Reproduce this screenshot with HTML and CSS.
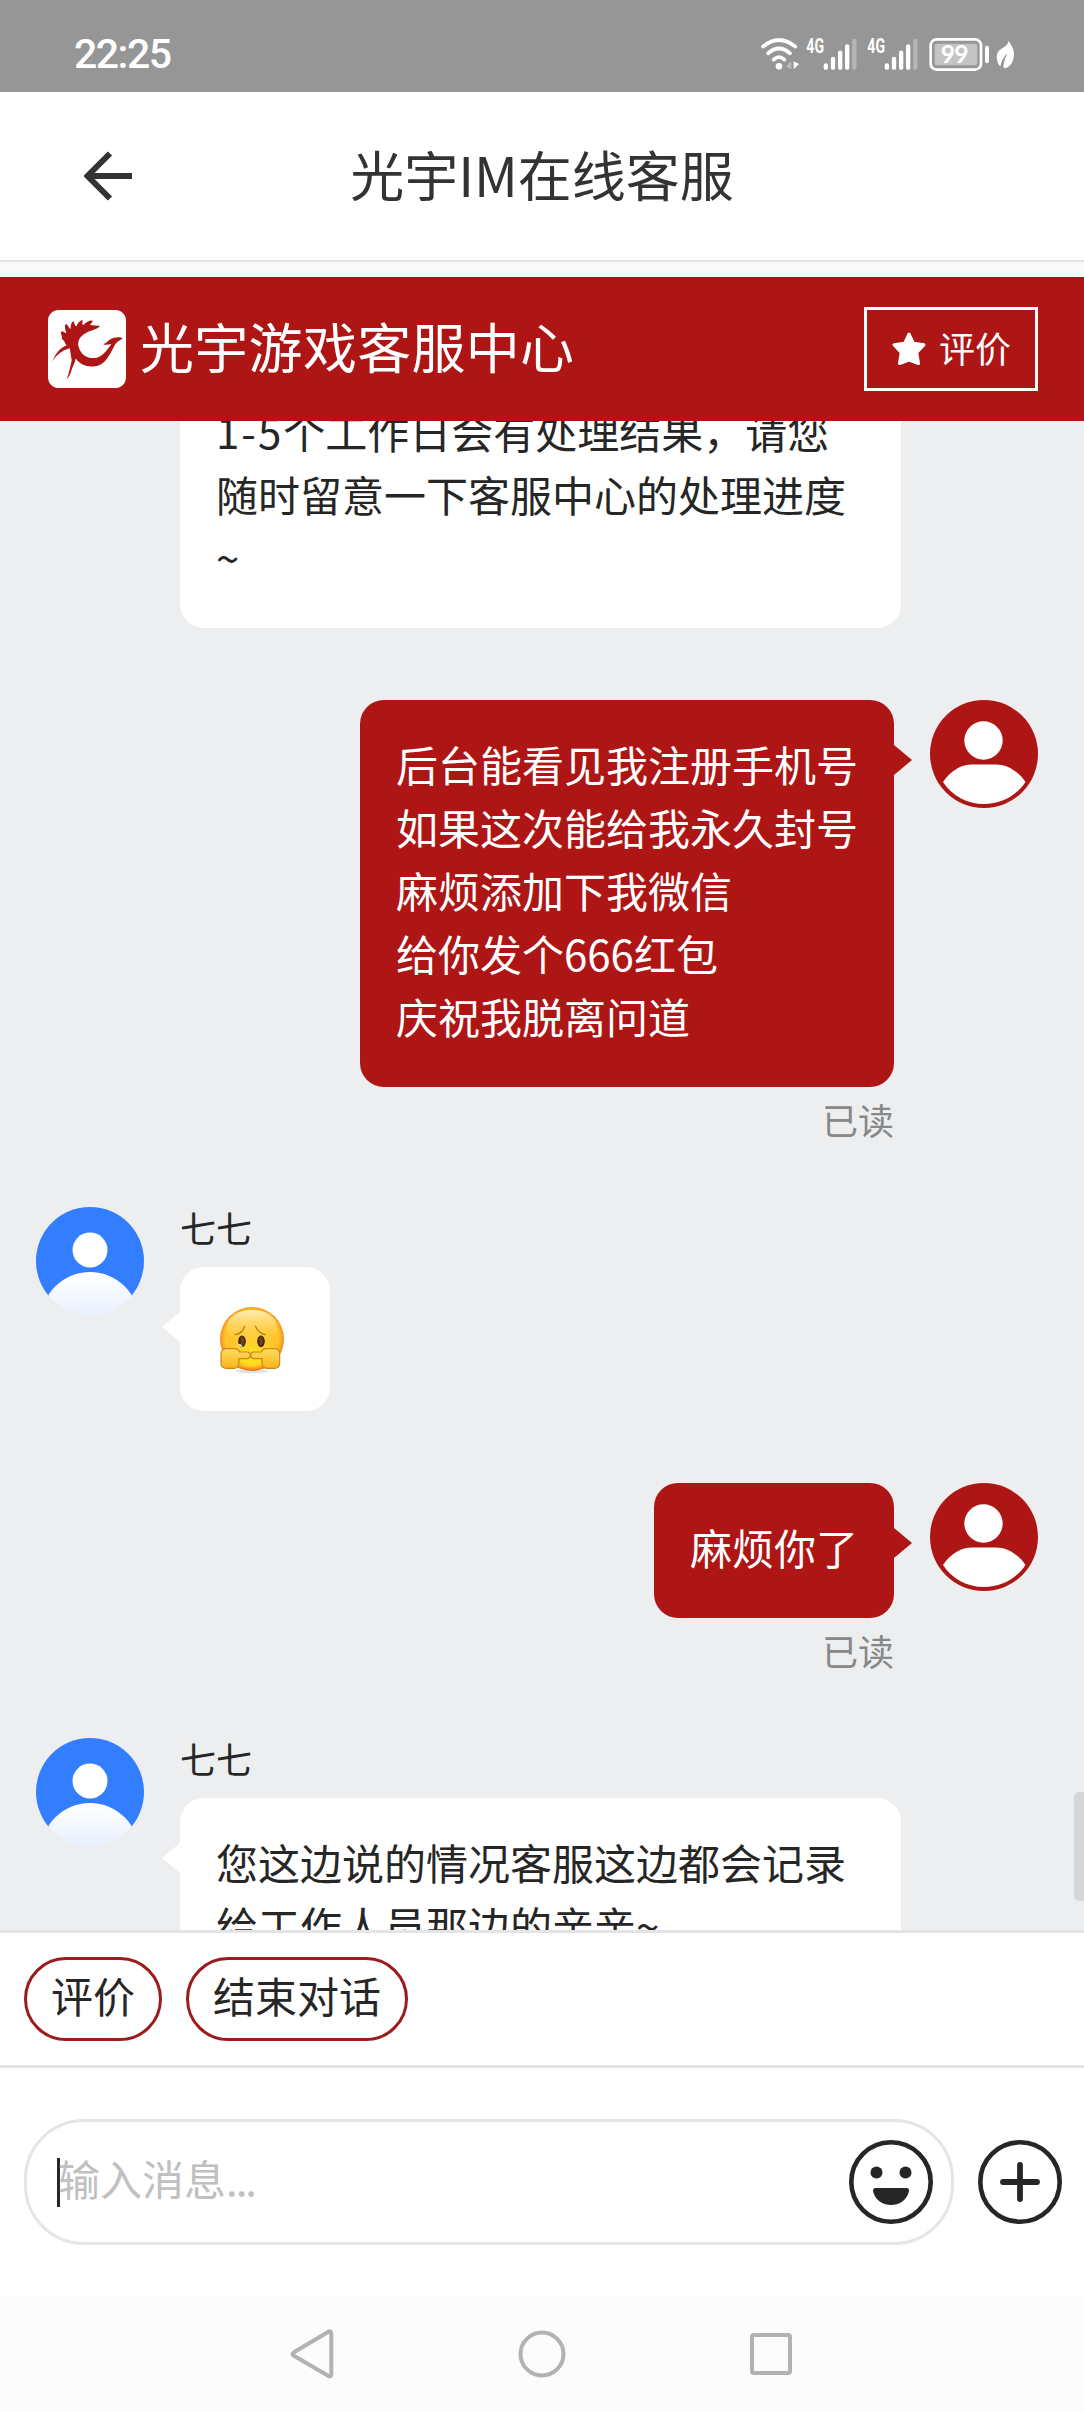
FILE: index.html
```html
<!DOCTYPE html>
<html lang="zh-CN">
<head>
<meta charset="utf-8">
<title>光宇IM在线客服</title>
<link rel="stylesheet" href="styles.css">
</head>
<body>
<svg class="defs" width="0" height="0" aria-hidden="true">
  <defs>
    <linearGradient id="body-fade" x1="0" y1="0" x2="0" y2=".45">
      <stop offset="0" stop-color="#ffffff"/><stop offset="1" stop-color="#e8f0ff"/>
    </linearGradient>
    <clipPath id="round"><circle cx="54" cy="54" r="54"/></clipPath>
    <symbol id="agent" viewBox="0 0 108 108">
      <g clip-path="url(#round)">
        <rect width="108" height="89" fill="#337eff"/>
        <circle cx="54" cy="43" r="17.500" fill="#fff"/>
        <circle cx="54" cy="114" r="49" fill="url(#body-fade)"/>
      </g>
    </symbol>
    <symbol id="visitor" viewBox="0 0 108 108">
      <circle cx="54" cy="54" r="54" fill="#ae1615"/>
      <circle cx="53.500" cy="40.500" r="19.200" fill="#fff"/>
      <path d="M13 82C21 70 32 64.500 42 64.500H66C77 64.500 88 71 95.500 82C86 96 71 104 54 104C37 104 22 96 13 82Z" fill="#fff"/>
    </symbol>
    <symbol id="signal" viewBox="195 105 183 114">
      <g stroke="#fff" stroke-width="13" stroke-linecap="round">
        <path d="M257.500 196V203M279 177V203M300.500 158V203M321.500 139V203"/>
        <path d="M343 123V203" stroke="#b5b5b5"/>
      </g>
      <text x="199" y="158" class="net" textLength="53" lengthAdjust="spacingAndGlyphs">4G</text>
    </symbol>
  </defs>
</svg>

<div class="phone">
  <div class="status">
    <span class="clock">22:25</span>
    <div class="status-icons">
      <svg width="44" height="38" viewBox="63 105 132 114">
        <g fill="none" stroke="#fff" stroke-width="11" stroke-linecap="round">
          <path d="M69 140Q117 100 166 140"/><path d="M84 160Q117 131 150 160"/><path d="M101 179Q117 164 133 179"/>
        </g>
        <circle cx="117" cy="199" r="10" fill="#fff"/>
        <path d="M154 184V208L138 199Z" fill="#bdbdbd"/><path d="M161 184L177 192L161 208Z" fill="#fff"/>
      </svg>
      <svg width="61" height="38"><use href="#signal"/></svg>
      <svg width="61" height="38"><use href="#signal"/></svg>
      <svg width="68" height="38" viewBox="561 105 204 114">
        <rect x="572" y="118" width="151" height="91" rx="18" fill="none" stroke="#fff" stroke-width="8"/>
        <rect x="584" y="131" width="128" height="65" rx="6" fill="#c4c4c4"/>
        <path d="M741 143V184" stroke="#fff" stroke-width="12" stroke-linecap="round"/>
        <text x="602" y="190" class="charge" textLength="84">99</text>
      </svg>
      <svg width="22" height="38" viewBox="765 105 66 114">
        <path d="M806 122C810 132 823 143 822 164C821 188 808 204 791 205C789 190 797 173 802 160C790 171 784 185 781 199C770 189 766 165 776 153C784 143 802 141 806 122Z" fill="#fff"/>
      </svg>
    </div>
  </div>

  <header class="titlebar">
    <svg class="back" width="49" height="50" viewBox="0 0 49 50"><path d="M26 2.500L3.500 25L26 47.500M4 25H48" fill="none" stroke="#333" stroke-width="6"/></svg>
    <h1>光宇IM在线客服</h1>
  </header>

  <div class="brand">
    <svg width="78" height="78" viewBox="24 18 234 234">
      <rect x="24" y="18" width="234" height="234" rx="32" fill="#fff"/>
      <g fill="#ae1615">
        <path d="M100 180C91 160 93 145 88 128C72 124 78 110 64 104C72 100 58 90 65 82C70 80 74 88 79 87C75 74 72 62 79 60C84 62 86 73 92 75C91 62 95 54 101 52C104 58 103 65 109 67C113 57 120 50 127 48C130 53 124 61 130 63C138 54 150 48 158 50C158 56 151 59 150 63L181 66C168 78 151 79 138 87C116 98 110 117 118 134C126 156 148 166 171 161C190 156 202 137 214 120C206 122 197 124 190 121C203 115 207 105 220 102C231 98 245 100 248 103C243 109 232 112 226 120C214 143 201 173 179 183C153 193 122 187 107 163Z"/>
        <path d="M89 121C67 128 51 139 36 174C47 156 60 141 91 132Z"/>
        <path d="M99 150C93 181 89 200 80 226C90 217 93 202 97 192C101 182 106 174 107 162Z"/>
      </g>
    </svg>
    <span class="brand-name">光宇游戏客服中心</span>
    <button class="rate">
      <svg width="34" height="34" viewBox="0 0 34 34"><path d="M17 2L21.500 11.300L32 12.800L24.800 20.500L26.500 31.500L17 28L7.500 31.500L9.200 20.500L2 12.800L12.500 11.300Z" fill="#fff" stroke="#fff" stroke-width="3" stroke-linejoin="round"/></svg>
      <span>评价</span>
    </button>
  </div>

  <main class="chat">
    <div class="log">
      <div class="msg received first">
        <div class="bubble"><span class="days">1-5</span>个工作日会有处理结果，请您<br>随时留意一下客服中心的处理进度<br>~</div>
      </div>
      <div class="msg sent">
        <div class="col">
          <div class="bubble">后台能看见我注册手机号<br>如果这次能给我永久封号<br>麻烦添加下我微信<br>给你发个666红包<br>庆祝我脱离问道</div>
          <div class="read">已读</div>
        </div>
        <svg class="avatar"><use href="#visitor"/></svg>
      </div>
      <div class="msg received">
        <svg class="avatar"><use href="#agent"/></svg>
        <div class="col">
          <div class="name">七七</div>
          <div class="bubble sticker">
            <svg width="66" height="68" viewBox="0 0 198 204">
              <defs>
                <radialGradient id="face" cx=".5" cy=".48" r=".52"><stop offset="0" stop-color="#ffce32"/><stop offset=".8" stop-color="#ffc42a"/><stop offset=".92" stop-color="#f9a01f"/><stop offset="1" stop-color="#e66a18"/></radialGradient>
                <linearGradient id="shine" x1="0" y1="0" x2="0" y2="1"><stop offset="0" stop-color="#fff0bb"/><stop offset="1" stop-color="#ffc936" stop-opacity="0"/></linearGradient>
                <radialGradient id="glow" cx=".5" cy=".7" r=".5"><stop offset="0" stop-color="#ffe81c"/><stop offset="1" stop-color="#ffe61c" stop-opacity="0"/></radialGradient>
                <linearGradient id="hand" x1="0" y1="0" x2="0" y2="1"><stop offset="0" stop-color="#ffdc62"/><stop offset="1" stop-color="#f6b516"/></linearGradient>
              </defs>
              <ellipse cx="99" cy="196" rx="50" ry="6" fill="#e2e2e2"/>
              <circle cx="99" cy="99" r="96" fill="url(#face)"/>
              <ellipse cx="99" cy="130" rx="74" ry="54" fill="url(#glow)"/>
              <ellipse cx="99" cy="64" rx="76" ry="52" fill="url(#shine)"/>
              <path d="M48 86Q71 83 77 60M109 60Q118 82 139 86" fill="none" stroke="#bb7c18" stroke-width="3.500" stroke-linecap="round"/>
              <ellipse cx="69" cy="106" rx="11.500" ry="17.500" fill="#49290a"/>
              <ellipse cx="126" cy="106" rx="11.500" ry="17.500" fill="#49290a"/>
              <ellipse cx="70" cy="105" rx="5" ry="13" fill="#704618"/><ellipse cx="126" cy="105" rx="5" ry="13" fill="#704618"/>
              <path d="M58 114Q60 124 72 122L65 115Z" fill="#d9f1ee"/>
              <g fill="url(#hand)" stroke="#cb8519" stroke-width="3.500">
                <path d="M19 128H47Q59 129 62 138H87Q94 140 94 148Q94 156 87 158H60V171Q59 186 46 187H20Q7 186 6 172V142Q7 130 19 128Z"/>
                <path d="M170 128H142Q130 129 127 138H102Q95 140 95 148Q95 156 102 158H129V171Q130 186 143 187H168Q181 186 182 172V142Q181 130 170 128Z"/>
              </g>
            </svg>
          </div>
        </div>
      </div>
      <div class="msg sent">
        <div class="col">
          <div class="bubble">麻烦你了</div>
          <div class="read">已读</div>
        </div>
        <svg class="avatar"><use href="#visitor"/></svg>
      </div>
      <div class="msg received">
        <svg class="avatar"><use href="#agent"/></svg>
        <div class="col">
          <div class="name">七七</div>
          <div class="bubble wide">您这边说的情况客服这边都会记录<br>给工作人员那边的亲亲~</div>
        </div>
      </div>
    </div>
    <div class="scrollbar"></div>
  </main>

  <div class="quick">
    <button class="pill">评价</button>
    <button class="pill">结束对话</button>
  </div>

  <div class="composer">
    <div class="field">
      <span class="caret"></span>
      <span class="placeholder">输入消息<span class="dots">...</span></span>
      <svg width="84" height="84" viewBox="0 0 84 84">
        <circle cx="42" cy="42" r="39.700" fill="none" stroke="#262626" stroke-width="4.600"/>
        <circle cx="27.500" cy="32.500" r="6" fill="#262626"/><circle cx="56.500" cy="32.500" r="6" fill="#262626"/>
        <path d="M26 48H58Q60 48 60 50.500C59 59 51 65 42 65C33 65 25 59 24 50.500Q24 48 26 48Z" fill="#262626"/>
      </svg>
    </div>
    <svg width="84" height="84" viewBox="0 0 84 84">
      <circle cx="42" cy="42" r="39.700" fill="none" stroke="#262626" stroke-width="4.600"/>
      <path d="M25 42H59M42 25V59" stroke="#262626" stroke-width="5.800" stroke-linecap="round"/>
    </svg>
  </div>

  <nav class="navbar">
    <svg width="48" height="50" viewBox="0 0 48 50"><path d="M41 2.500Q43.300 2 43.300 5V45Q43.300 48 40.500 47L5.500 26.500Q3.500 25 5.500 23.500Z" fill="none" stroke="#b2b2b2" stroke-width="4"/></svg>
    <svg width="48" height="50" viewBox="0 0 48 50"><circle cx="24" cy="25" r="21.500" fill="none" stroke="#b2b2b2" stroke-width="4"/></svg>
    <svg width="48" height="50" viewBox="0 0 48 50"><rect x="5" y="6" width="38" height="38" rx="2" fill="none" stroke="#b2b2b2" stroke-width="4"/></svg>
  </nav>
</div>
</body>
</html>
```
FILE: styles.css
```css
* { box-sizing: border-box; }

body {
  margin: 0;
  font-family: "Noto Sans CJK SC", sans-serif;
  color: #262626;
  background: #fff;
}

svg { display: block; flex: none; }
.defs { position: absolute; }

button {
  font: inherit;
  color: inherit;
  background: none;
  margin: 0;
}

.phone {
  width: 1084px;
  height: 2412px;
  display: flex;
  flex-direction: column;
  overflow: hidden;
}

.status {
  flex: none;
  height: 92px;
  padding: 16px 67px 0 74px;
  background: #969696;
  color: #fff;
  display: flex;
  align-items: center;
  justify-content: space-between;
}
.clock {
  font: 500 41px/60px Roboto, sans-serif;
  letter-spacing: -1.5px;
}
.status-icons { display: flex; }
.net { font: 700 58px Roboto, sans-serif; fill: #fff; }
.charge { font: 700 74px Lato, sans-serif; fill: #fff; }

.titlebar {
  flex: none;
  height: 185px;
  padding: 0 84px 17px;
  display: flex;
  align-items: center;
  background: linear-gradient(#fff 168px, #dcdcdc 168px, #ececec 170px, #fafafa 170px);
}
.titlebar h1 {
  flex: 1;
  margin: 0 49px 4px 0;
  text-align: center;
  font-size: 54px;
  font-weight: 400;
  line-height: 80px;
  color: #333;
}

.brand {
  flex: none;
  height: 144px;
  padding: 0 46px 0 48px;
  display: flex;
  align-items: center;
  background: #ae1615;
  color: #fff;
}
.brand-name {
  flex: 1;
  margin: 0 0 6px 14px;
  font-size: 54px;
  line-height: 80px;
  letter-spacing: 0.3px;
}
.rate {
  width: 174px;
  height: 84px;
  padding: 0 0 0 25px;
  border: 3px solid #fff;
  display: flex;
  align-items: center;
  gap: 13px;
  font-size: 36px;
  line-height: 54px;
}
.rate span { margin-bottom: 4px; }

.chat {
  flex: none;
  position: relative;
  height: 1509px;
  overflow: hidden;
  background: #eceef0;
}
.log {
  margin-top: -54px;
  display: flex;
  flex-direction: column;
}
.msg {
  display: flex;
  gap: 36px;
  padding: 0 46px 0 36px;
  margin-bottom: 72px;
}
.msg.first { padding-left: 180px; }
.msg.first .bubble { width: 721px; }
.msg.sent {
  justify-content: flex-end;
  margin-bottom: 64px;
}
.avatar { width: 108px; height: 108px; }
.col {
  display: flex;
  flex-direction: column;
  align-items: flex-start;
}
.sent .col { align-items: flex-end; }
.bubble {
  position: relative;
  padding: 32px 36px 40px;
  border-radius: 24px;
  background: #fff;
  font-size: 42px;
  line-height: 63px;
  white-space: nowrap;
}
.bubble.wide { width: 721px; height: 198px; }
.bubble.sticker { padding: 39px 45px 37px 39px; }
.sent .bubble { background: #ae1615; color: #fff; }
.days { letter-spacing: 2px; }

/* speech tails */
.col .bubble::after {
  content: "";
  position: absolute;
  top: 45px;
  border: 15px solid transparent;
}
.received .col .bubble::after {
  left: -18px;
  border-width: 15px 18px 15px 0;
  border-right-color: #fff;
}
.sent .col .bubble::after {
  right: -18px;
  border-width: 15px 0 15px 18px;
  border-left-color: #ae1615;
}

.name {
  height: 60px;
  font-size: 36px;
  line-height: 40px;
}
.read {
  margin-top: 8px;
  font-size: 36px;
  line-height: 48px;
  color: #888;
}
.scrollbar {
  position: absolute;
  right: 0;
  top: 1371px;
  width: 10px;
  height: 109px;
  border-radius: 5px 0 0 5px;
  background: #d5d6d8;
}

.quick {
  flex: none;
  height: 138px;
  padding: 0 24px;
  border-top: 3px solid #e4e4e4;
  border-bottom: 3px solid #e4e4e4;
  display: flex;
  align-items: center;
  gap: 24px;
}
.pill {
  height: 84px;
  padding: 0 24px 8px;
  border: 3px solid #9c1b1b;
  border-radius: 42px;
  font-size: 42px;
  line-height: 60px;
}

.composer {
  flex: none;
  height: 228px;
  padding: 51px 22px 0 24px;
  display: flex;
  align-items: flex-start;
  justify-content: space-between;
}
.composer > svg { margin-top: 21px; }
.field {
  width: 930px;
  height: 126px;
  padding: 0 18px 0 30px;
  border: 3px solid #e5e5e5;
  border-radius: 60px;
  display: flex;
  align-items: center;
}
.caret {
  width: 3px;
  height: 49px;
  background: #262626;
}
.placeholder {
  flex: 1;
  margin: -9px 0 0 -2px;
  font-size: 42px;
  line-height: 60px;
  color: #c0c0c0;
}
.dots { letter-spacing: -2px; }

.navbar {
  flex: none;
  height: 116px;
  padding: 0 289px 0 288px;
  display: flex;
  align-items: center;
  justify-content: space-between;
  background: #fcfcfc;
}
```
